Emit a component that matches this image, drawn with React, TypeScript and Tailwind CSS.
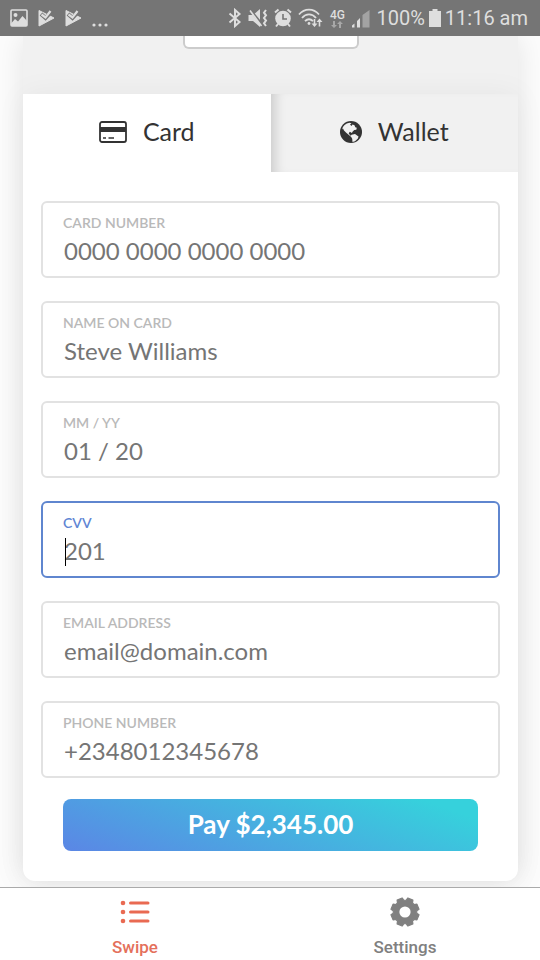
import type { ReactNode } from "react";

type FieldProps = {
  id: string;
  label: string;
  placeholder: string;
  type?: string;
  active?: boolean;
};

function Field({ id, label, placeholder, type = "text", active = false }: FieldProps) {
  return (
    <div
      className={`relative rounded-md border-2 bg-white px-5 pt-3 pb-[11px] ${
        active ? "border-[#5f86cf]" : "border-[#e2e2e2]"
      }`}
    >
      <label
        htmlFor={id}
        className={`block text-sm leading-4 font-semibold uppercase ${
          active ? "text-[#5f86d4]" : "text-[#b9b9b9]"
        }`}
      >
        {label}
      </label>
      <input
        id={id}
        type={type}
        placeholder={placeholder}
        className="mt-1.5 block h-7 w-full bg-transparent pl-px text-2xl leading-7 text-[#333] outline-none placeholder:text-[#757575]"
      />
      {active && <span className="absolute bottom-[10px] left-[22px] h-7 w-px bg-black" />}
    </div>
  );
}

const fields: FieldProps[] = [
  { id: "card-number", label: "Card number", placeholder: "0000 0000 0000 0000" },
  { id: "card-name", label: "Name on card", placeholder: "Steve Williams" },
  { id: "expiry", label: "MM / YY", placeholder: "01 / 20" },
  { id: "cvv", label: "CVV", placeholder: "201", active: true },
  { id: "email", label: "Email address", placeholder: "email@domain.com", type: "email" },
  { id: "phone", label: "Phone number", placeholder: "+2348012345678", type: "tel" },
];

function PlayCheck() {
  return (
    <svg width="17" height="18" viewBox="0 0 17 18" fill="none">
      <path d="M1 1.5 16 9 1 17Z" fill="#dedede" stroke="#dedede" strokeLinejoin="round" />
      <path d="M3 5 7.5 9 14 2" stroke="#757575" strokeWidth="4" />
      <path d="M3.5 5.5 7.5 8.5 12.5 2" stroke="#dedede" strokeWidth="2.2" />
    </svg>
  );
}

function StatusBar() {
  return (
    <header className="flex h-9 shrink-0 items-center justify-between bg-[#757575] pr-3 pl-[10px] font-[Roboto,sans-serif] text-xl text-[#dedede]">
      <div className="flex items-center gap-[10px]">
        <svg width="18" height="18" viewBox="0 0 18 18" fill="none">
          <rect x="1" y="1" width="16" height="16" rx="1" stroke="#dedede" strokeWidth="1.6" />
          <circle cx="5.5" cy="6" r="2" fill="#dedede" />
          <path d="M1 14.5 5 10l3 2.5L12.5 7 17 12v5H1Z" fill="#dedede" />
        </svg>
        <PlayCheck />
        <PlayCheck />
        <svg width="16" height="18" viewBox="0 0 16 18" fill="#dedede">
          <circle cx="2" cy="16" r="1.6" />
          <circle cx="8" cy="16" r="1.6" />
          <circle cx="14" cy="16" r="1.6" />
        </svg>
      </div>
      <div className="flex items-center gap-1">
        <div className="flex items-center gap-1.5">
          <svg width="14" height="20" viewBox="0 0 14 20" fill="none" stroke="#dedede" strokeWidth="2">
            <path d="M1.5 5.5 11.5 14 7 18V2l4.500 4L1.500 14.500" />
          </svg>
          <svg width="20" height="20" viewBox="0 0 20 20" fill="none">
            <path d="M.5 7H5L12 1v18L5 13H.5Z" fill="#dedede" />
            <path d="M1.500 1 14.500 17" stroke="#757575" strokeWidth="2.500" />
            <path d="M2 2.500 13.500 18" stroke="#dedede" strokeWidth="1.600" />
            <path
              d="m18 2-2 2.700 2 2.600-2 2.700 2 2.600-2 2.700 2 2.700"
              stroke="#dedede"
              strokeWidth="2"
            />
          </svg>
          <svg width="18" height="20" viewBox="0 0 18 20" fill="none">
            <circle cx="9" cy="10.500" r="7.800" fill="#dedede" />
            <path d="M1 4.500 4.500 1.500M17 4.500 13.500 1.500M4 16l-2 2.500M14 16l2 2.500" stroke="#dedede" strokeWidth="2" />
            <path d="M9 6v5h4" stroke="#757575" strokeWidth="1.600" />
          </svg>
          <svg width="25" height="20" viewBox="0 0 25 20" fill="none">
            <path
              d="M1 6.500C6.500 0 15.500 0 21 6.500M4 10C8 5.200 14 5.200 18 10M7 13.200c2.500-2.600 5.500-2.600 8 0"
              stroke="#dedede"
              strokeWidth="1.800"
            />
            <circle cx="11" cy="15.500" r="1.400" fill="#dedede" />
            <path d="M16.500 11v6M21.500 18.500V12" stroke="#dedede" strokeWidth="1.600" />
            <path d="M13.500 15.500h6l-3 3.500ZM18.500 14h6l-3-3.500Z" fill="#dedede" />
          </svg>
          <div className="flex w-4 flex-col items-center text-xs leading-3 font-medium">
            4G
            <svg width="12" height="7" viewBox="0 0 12 7" fill="#a8a8a8">
              <path d="M2 0h2v4h2L3 7 0 4h2ZM8 7h2V3h2L9 0 6 3h2Z" />
            </svg>
          </div>
          <svg width="19" height="19" viewBox="0 0 19 19" fill="#dedede">
            <path d="M1 16.500 3.500 14.500V18.500H1ZM6 12l3-3v9.500H6Z" />
            <path d="M11.500 6 18.500 1v17.500h-7Z" fill="#a3a3a3" />
          </svg>
        </div>
        <span className="pl-0.5">100%</span>
        <svg width="12" height="18" viewBox="0 0 12 18" fill="#dedede">
          <path d="M3.500 0h5v2H12v16H0V2h3.500Z" />
        </svg>
        <span>11:16 am</span>
      </div>
    </header>
  );
}

function CardIcon() {
  return (
    <svg width="28" height="22" viewBox="0 0 28 22" fill="none">
      <rect x="1" y="1" width="26" height="20" rx="2" stroke="#333" strokeWidth="1.800" />
      <path d="M1 6h26v5H1Z" fill="#333" />
      <path d="M4 17h3M9.500 17H15" stroke="#333" strokeWidth="1.600" />
    </svg>
  );
}

function GlobeIcon() {
  return (
    <svg width="22" height="22" viewBox="0 0 22 22">
      <circle cx="11" cy="11" r="11" fill="#333" />
      <path
        d="M2 8.500C2.800 5 5.500 2.500 9.500 1.800l2 .4-1.500 1.300 1.500 1.500 1-1.500 2 .8.8 2 1.500.4-.5 2-2 .4-1.600 1.400-.8 1.500-2-1.200-1.200 1.500 1.500 2.200 2.300.2.500 1.600-2-.5L6.500 12 4 9.500 3 7.500Z"
        fill="#f1f1f1"
      />
      <path d="M11.500 13.700 15 13l3.500 2.500-.6 2-2.900 2.800-2.500.8-.3-3.300-1.400-2.500Z" fill="#f1f1f1" />
    </svg>
  );
}

const gearPoints = Array.from({ length: 8 }, (_, k) => {
  const point = (radius: number, degrees: number) => {
    const angle = (degrees * Math.PI) / 180;
    return `${15 + radius * Math.cos(angle)},${15 + radius * Math.sin(angle)}`;
  };
  const center = 22.5 + 45 * k;
  return [
    point(11.8, center - 17),
    point(14.3, center - 11),
    point(14.3, center + 11),
    point(11.8, center + 17),
  ].join(" ");
}).join(" ");

function GearIcon() {
  return (
    <svg width="30" height="30" viewBox="0 0 30 30">
      <polygon points={gearPoints} fill="#808080" stroke="#808080" strokeWidth="1.200" strokeLinejoin="round" />
      <circle cx="15" cy="15" r="5.600" fill="#fff" />
    </svg>
  );
}

function ListIcon() {
  return (
    <svg width="30" height="30" viewBox="0 0 30 30" fill="#e96a52">
      {[6, 15, 24].map((y) => (
        <g key={y}>
          <circle cx="3" cy={y} r="2.300" />
          <rect x="9" y={y - 1.5} width="20.500" height="3" rx="1.500" />
        </g>
      ))}
    </svg>
  );
}

function Tab({ icon, children, selected }: { icon: ReactNode; children: ReactNode; selected?: boolean }) {
  return (
    <button
      type="button"
      role="tab"
      aria-selected={!!selected}
      className={`flex h-[78px] flex-1 items-center justify-center gap-4 pb-0.5 text-[25px] text-[#333] ${
        selected ? "bg-white" : "bg-[#f1f1f1] shadow-[inset_12px_0_12px_-8px_rgba(0,0,0,0.16)]"
      }`}
    >
      {icon}
      {children}
    </button>
  );
}

export default function App() {
  return (
    <div className="flex h-screen flex-col bg-[#fcfcfc] font-[Lato,sans-serif]">
      <StatusBar />
      <main className="flex-1 overflow-hidden pr-[22px] pl-[23px]">
        <section className="rounded-b-xl bg-[#f1f1f1] shadow-[0_0_30px_rgba(0,0,0,0.1)]">
          <div className="flex h-[58px] items-start justify-center">
            <button
              type="button"
              aria-label="Merchant"
              className="h-[13px] w-44 rounded-b-md border-2 border-t-0 border-[#ccc] bg-white"
            />
          </div>
          <div className="rounded-b-xl bg-white shadow-[0_0_30px_rgba(0,0,0,0.05)]">
            <div role="tablist" className="flex">
              <Tab icon={<CardIcon />} selected>
                Card
              </Tab>
              <Tab icon={<GlobeIcon />}>Wallet</Tab>
            </div>
            <form className="flex flex-col gap-[23px] px-[18px] pt-[29px] pb-[30px]">
              {fields.map((field) => (
                <Field key={field.id} {...field} />
              ))}
              <button
                type="button"
                className="mx-[22px] -mt-0.5 h-[52px] rounded-lg bg-[linear-gradient(20deg,#5b86e5_0%,#36d1dc_90%)] pb-0.5 text-[26px] font-bold text-white"
              >
                Pay $2,345.00
              </button>
            </form>
          </div>
        </section>
      </main>
      <nav className="flex h-[73px] shrink-0 border-t border-[#aaa] bg-white font-[Roboto,sans-serif] text-[17px] leading-6 font-medium">
        <a href="#swipe" className="flex flex-1 flex-col items-center gap-2 pt-[9px] text-[#e4705b]">
          <ListIcon />
          Swipe
        </a>
        <a href="#settings" className="flex flex-1 flex-col items-center gap-2 pt-[9px] text-[#808080]">
          <GearIcon />
          Settings
        </a>
      </nav>
    </div>
  );
}
